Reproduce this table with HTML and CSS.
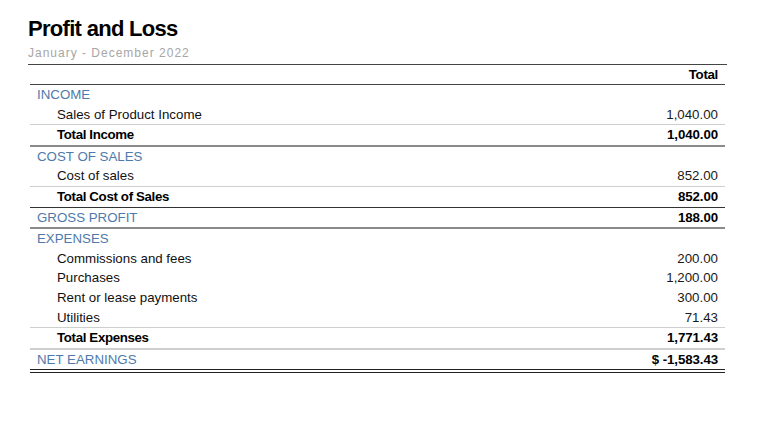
FILE: index.html
```html
<!DOCTYPE html>
<html>
<head>
<meta charset="utf-8">
<link rel="stylesheet" href="styles.css">
</head>
<body>
<div class="page">
  <div class="head">
    <h1 class="title">Profit and Loss</h1>
    <div class="period">January - December 2022</div>
  </div>
  <div class="report">
    <div class="row header"><span class="label"></span><span class="amt">Total</span></div>
    <div class="row section"><span class="label">INCOME</span><span class="amt"></span></div>
    <div class="row item sep"><span class="label">Sales of Product Income</span><span class="amt">1,040.00</span></div>
    <div class="row item total sep-gray"><span class="label">Total Income</span><span class="amt">1,040.00</span></div>
    <div class="row section"><span class="label">COST OF SALES</span><span class="amt"></span></div>
    <div class="row item sep"><span class="label">Cost of sales</span><span class="amt">852.00</span></div>
    <div class="row item total sep-dark"><span class="label">Total Cost of Sales</span><span class="amt">852.00</span></div>
    <div class="row section strong-amt sep-gray"><span class="label">GROSS PROFIT</span><span class="amt">188.00</span></div>
    <div class="row section"><span class="label">EXPENSES</span><span class="amt"></span></div>
    <div class="row item"><span class="label">Commissions and fees</span><span class="amt">200.00</span></div>
    <div class="row item"><span class="label">Purchases</span><span class="amt">1,200.00</span></div>
    <div class="row item"><span class="label">Rent or lease payments</span><span class="amt">300.00</span></div>
    <div class="row item sep"><span class="label">Utilities</span><span class="amt">71.43</span></div>
    <div class="row item total sep-light2"><span class="label">Total Expenses</span><span class="amt">1,771.43</span></div>
    <div class="row section strong-amt net"><span class="label">NET EARNINGS</span><span class="amt">$ -1,583.43</span></div>
  </div>
</div>
</body>
</html>
```

FILE: styles.css
```css
html, body {
  margin: 0;
  padding: 0;
  background: #ffffff;
}

body {
  font-family: "Liberation Sans", Arial, Helvetica, sans-serif;
  color: #111;
}

.page {
  padding: 16px 0 0 28px;
}

.head {
  width: 699px;
  border-bottom: 1px solid #444;
  padding-bottom: 4px;
}

.title {
  margin: 0;
  font-size: 22px;
  font-weight: bold;
  line-height: 26px;
  color: #000;
  letter-spacing: -0.7px;
}

.period {
  margin-top: 4px;
  font-size: 12px;
  line-height: 14px;
  letter-spacing: 1px;
  color: #a6a6a6;
}

.report {
  width: 695px;
  margin-left: 2px;
  font-size: 13.3px;
}

.row {
  display: flex;
  justify-content: space-between;
  align-items: center;
  height: 19.6px;
  line-height: 19.6px;
  padding: 0 7px;
}

.row.header {
  height: 19px;
  border-bottom: 1px solid #444;
  font-weight: bold;
  color: #000;
}

.row.header .amt {
  letter-spacing: -0.3px;
  color: #000;
}

.section .label {
  color: #4d7aab;
}

.item .label {
  padding-left: 20px;
  color: #111;
}

.amt {
  text-align: right;
  color: #1a1a1a;
}

.total .label {
  font-weight: bold;
  color: #000;
  letter-spacing: -0.35px;
}

.total .amt,
.strong-amt .amt {
  font-weight: bold;
  color: #000;
  letter-spacing: -0.1px;
}

.sep {
  border-bottom: 1px solid #cfcfcf;
}

.sep-gray {
  border-bottom: 2px solid #8a8a8a;
}

.sep-dark {
  border-bottom: 1px solid #333;
}

.sep-light2 {
  border-bottom: 2px solid #cfcfcf;
}

.net {
  border-bottom: 4px double #222;
}
```
